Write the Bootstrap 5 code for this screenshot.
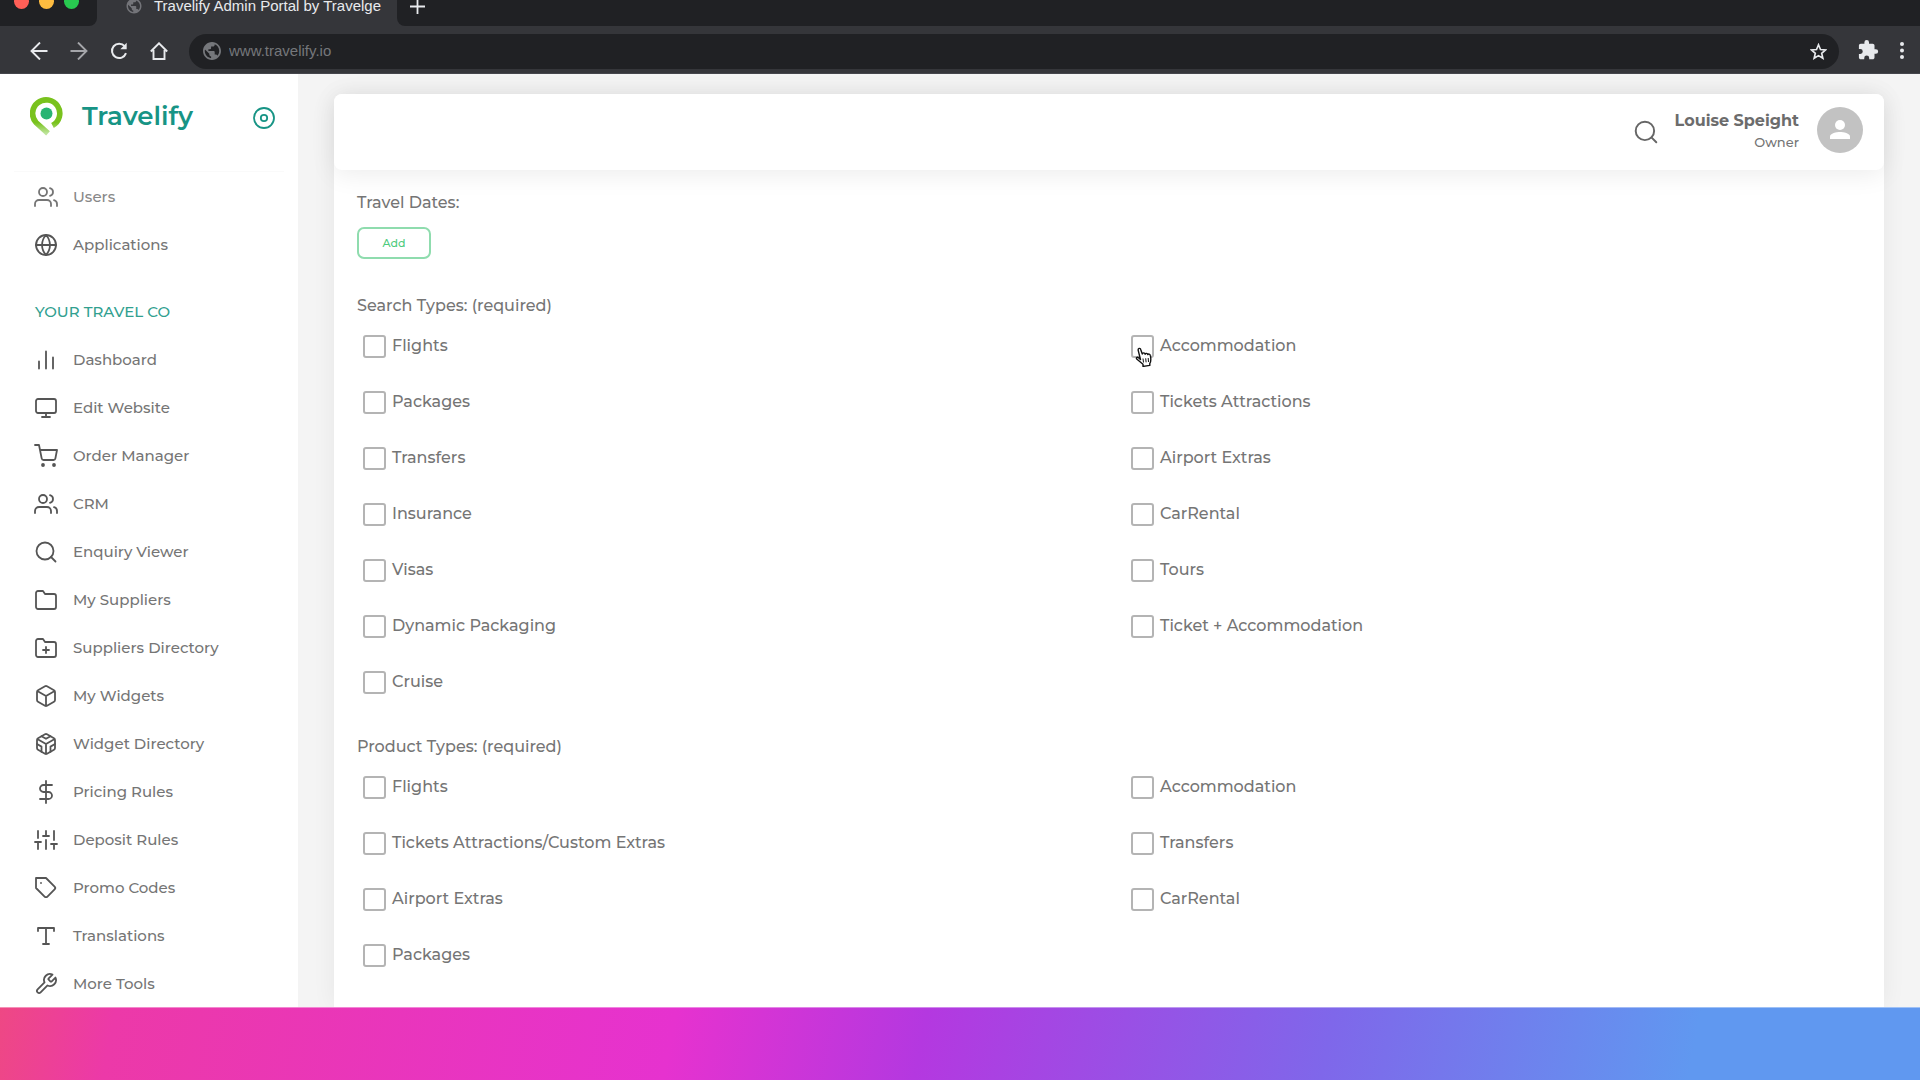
<!DOCTYPE html>
<html lang="en">
<head>
<meta charset="utf-8">
<meta name="viewport" content="width=device-width, initial-scale=1">
<title>Travelify Admin Portal</title>
<link href="https://cdn.jsdelivr.net/npm/bootstrap@5.3.0/dist/css/bootstrap.min.css" rel="stylesheet">
<style>
  body { font-family: Montserrat, Inter, "Open Sans", sans-serif; font-weight: 500; color: #757575; background: #f4f4f4; }
  svg { display: block; flex: none; }
  .ico { width: 24px; height: 24px; fill: none; stroke: currentColor; stroke-width: 1.8; stroke-linecap: round; stroke-linejoin: round; }

  /* browser chrome */
  .chrome { font-family: "Liberation Sans", Arial, sans-serif; font-weight: 400; background: #35363a; }
  .tab-strip { height: 26px; }
  .strip-left { width: 97px; padding-left: 14px; background: #202124; border-bottom-right-radius: 8px; }
  .strip-right { background: #202124; border-bottom-left-radius: 8px; padding-left: 11px; }
  .strip-item { height: 40px; margin-top: -14px; }
  .lights { gap: 10px; }
  .light { width: 15px; height: 15px; border-radius: 50%; margin-bottom: 10px; }
  .light-close { background: #ff5f57; }
  .light-min { background: #febc40; }
  .light-max { background: #28c950; }
  .page-tab { width: 300px; padding-left: 28px; gap: 11px; color: #e8eaed; font-size: 15px; }
  .toolbar { height: 48px; padding: 3px 7px 0 30px; border-bottom: 1px solid #45464c; }
  .tool-btn { display: flex; align-items: center; justify-content: center; flex: none; padding: 0; border: 0; background: none; color: #e8eaed; width: 18px; height: 18px; }
  .tool-nav { gap: 22px; margin-right: 21px; }
  .tool-end { gap: 17px; margin-left: 21px; }
  .address { height: 35px; border-radius: 18px; background: #202124; padding: 0 12px 0 14px; gap: 8px; }
  .address input { background: none; border: 0; outline: 0; color: #75777b; font-size: 15px; padding: 0; min-width: 0; }

  /* sidebar */
  .sidebar { width: 298px; background: #fff; }
  .brand-row { height: 97px; padding: 22px 22px 0 30px; }
  .brand-name { color: #179485; font-size: 26px; line-height: 41px; font-weight: 600; margin-left: 19px; }
  .brand-row .plain-btn { margin-top: 10px; color: #179485; }
  .side-link { height: 48px; padding-left: 34px; gap: 15px; font-size: 15px; color: #757575; text-decoration: none; }
  .side-link .ico { color: #555; }
  .side-link.faded { color: #888; }
  .side-link.faded .ico { color: #757575; }
  .side-heading { height: 67px; padding: 18px 0 0 35px; margin: 0; font-size: 15px; font-weight: 500; color: #31a08f; }
  .side-rule { border-top: 1px solid #fafafa; margin: 0 14px; height: 2px; }

  /* main panel */
  .stage { padding: 20px 36px 0; }
  .panel { background: #fff; border-radius: 8px 8px 0 0; box-shadow: 0 0 24px rgba(0,0,0,.06); }
  .panel-head { height: 76px; padding: 0 21px 4px; background: #fff; border-radius: 8px; box-shadow: 0 4px 26px rgba(0,0,0,.08); }
  .user-block { padding-top: 2px; }
  .user-name { font-size: 16px; line-height: 22px; font-weight: 700; color: #6c6c6c; }
  .user-role { font-size: 13px; line-height: 20px; }
  .avatar-dot { width: 46px; height: 46px; border-radius: 50%; background: #c2c2c2; margin-left: 18px; }
  .plain-btn { padding: 0; border: 0; background: none; color: #666; }
  .panel-head .ico { width: 26px; height: 26px; }
  .form-area { padding: 21px 0 24px 14px; font-size: 16px; line-height: 24px; }
  .group-title { font-size: 16px; line-height: 24px; margin: 0 0 0 9px; font-weight: 500; float: none; }
  .dates { padding-left: 9px; gap: 12px; margin-bottom: 35px; }
  .add-btn { width: 74px; height: 32px; padding: 0; font-size: 11px; font-weight: 500; border-radius: 7px; color: #4ecb7d; border: 2px solid #8fdcae; background: #fff; }
  .group + .group { margin-top: 25px; }
  .pick { height: 56px; padding: 0 0 0 15px; margin: 0; gap: 6px; }
  .pick .form-check-input { float: none; width: 23px; height: 23px; margin: 0; border: 2px solid #b4b4b4; border-radius: 3px; flex: none; }
  .pointer { left: 19px; top: 29px; }

  .gradient-bar { height: 73px; border-top: 1px solid rgba(255,255,255,.4); background: linear-gradient(101deg, #ee4884 0%, #ec39a8 6%, #e632cf 35%, #b438e0 48%, #7f67ea 69%, #6098f0 88%, #6098f0 100%) border-box; }
</style>
<script src="https://cdn.jsdelivr.net/npm/bootstrap@5.3.0/dist/js/bootstrap.bundle.min.js"></script>
</head>
<body>
<svg width="0" height="0" class="position-absolute" aria-hidden="true">
  <symbol id="users" viewBox="0 0 24 24"><path d="M17 21v-2a4 4 0 0 0-4-4H5a4 4 0 0 0-4 4v2"/><circle cx="9" cy="7" r="4"/><path d="M23 21v-2a4 4 0 0 0-3-3.87M16 3.13a4 4 0 0 1 0 7.75"/></symbol>
  <symbol id="globe" viewBox="0 0 24 24"><circle cx="12" cy="12" r="10"/><path d="M2 12h20M12 2a15.3 15.3 0 0 1 4 10 15.3 15.3 0 0 1-4 10 15.3 15.3 0 0 1-4-10 15.3 15.3 0 0 1 4-10z"/></symbol>
  <symbol id="search" viewBox="0 0 24 24"><circle cx="11" cy="11" r="8.5"/><path d="M21.5 21.5 17 17"/></symbol>
  <symbol id="folder" viewBox="0 0 24 24"><path d="M22 19a2 2 0 0 1-2 2H4a2 2 0 0 1-2-2V5a2 2 0 0 1 2-2h5l2 3h9a2 2 0 0 1 2 2z"/></symbol>
  <symbol id="box" viewBox="0 0 24 24"><path d="M21 16V8a2 2 0 0 0-1-1.73l-7-4a2 2 0 0 0-2 0l-7 4A2 2 0 0 0 3 8v8a2 2 0 0 0 1 1.73l7 4a2 2 0 0 0 2 0l7-4A2 2 0 0 0 21 16zM3.27 6.96 12 12.01l8.73-5.05M12 22.08V12"/></symbol>
  <symbol id="world" viewBox="0 0 24 24"><path d="M12 2C6.48 2 2 6.48 2 12s4.48 10 10 10 10-4.48 10-10S17.52 2 12 2zm-1 17.93c-3.95-.49-7-3.85-7-7.93 0-.62.08-1.21.21-1.79L9 15v1c0 1.1.9 2 2 2v1.93zm6.9-2.54c-.26-.81-1-1.39-1.9-1.39h-1v-3c0-.55-.45-1-1-1H8v-2h2c.55 0 1-.45 1-1V7h2c1.1 0 2-.9 2-2v-.41c2.93 1.19 5 4.06 5 7.41 0 2.08-.8 3.97-2.1 5.39z"/></symbol>
</svg>

<div class="d-flex flex-column vh-100 overflow-hidden">
  <header class="chrome flex-shrink-0">
    <div class="tab-strip d-flex">
      <div class="strip-left">
        <div class="strip-item lights d-flex align-items-center">
          <span class="light light-close"></span><span class="light light-min"></span><span class="light light-max"></span>
        </div>
      </div>
      <div class="page-tab strip-item d-flex align-items-center text-nowrap">
        <svg width="18" height="18" fill="#737479"><use href="#world"/></svg>
        <span>Travelify Admin Portal by Travelge</span>
      </div>
      <div class="strip-right flex-grow-1">
        <div class="strip-item d-flex align-items-center">
          <button class="tool-btn" aria-label="New tab"><svg width="15" height="15" viewBox="0 0 15 15" stroke="currentColor" stroke-width="1.8"><path d="M7.500 0v15M0 7.500h15"/></svg></button>
        </div>
      </div>
    </div>
    <div class="toolbar d-flex align-items-center">
      <div class="tool-nav d-flex">
        <button class="tool-btn" aria-label="Back"><svg width="18" height="18" viewBox="0 0 18 18" fill="none" stroke="currentColor" stroke-width="1.9"><path d="M17.500 9H1.500M10 .5 1.500 9l8.500 8.500"/></svg></button>
        <button class="tool-btn" aria-label="Forward"><svg width="18" height="18" viewBox="0 0 18 18" fill="none" stroke="#a5a6aa" stroke-width="1.900"><path d="M.5 9h16M8 .5 16.500 9 8 17.500"/></svg></button>
        <button class="tool-btn" aria-label="Reload"><svg width="18" height="18" viewBox="0 0 18 18" fill="none" stroke="currentColor" stroke-width="2"><path d="M14.700 4.200A7.200 7.200 0 1 0 16 11.200"/><path d="M16.700 .8v6.400h-6.400z" fill="currentColor" stroke="none"/></svg></button>
        <button class="tool-btn" aria-label="Home"><svg width="18" height="18" viewBox="0 0 18 18" fill="none" stroke="currentColor" stroke-width="1.900"><path d="M.8 9.500 9 1.300l8.200 8.200M3.500 8v9h11V8"/></svg></button>
      </div>
      <div class="address d-flex align-items-center flex-grow-1">
        <svg width="18" height="18" viewBox="2 2 20 20" fill="#75777b"><use href="#world" width="24" height="24"/></svg>
        <input class="flex-grow-1" type="text" value="www.travelify.io" aria-label="Address">
        <button class="tool-btn" aria-label="Bookmark"><svg width="17" height="17" viewBox="0 0 24 24" fill="none" stroke="currentColor" stroke-width="2.300"><path d="m12 2.500 2.800 6.700 7.200.6-5.500 4.700 1.700 7.100L12 17.800l-6.200 3.800 1.700-7.100L2 9.800l7.200-.6z"/></svg></button>
      </div>
      <div class="tool-end d-flex">
        <button class="tool-btn" aria-label="Extensions"><svg width="22" height="22" viewBox="1 1 24 24" fill="currentColor"><path d="M20.500 11H19V7c0-1.100-.9-2-2-2h-4V3.500a2.500 2.500 0 0 0-5 0V5H4c-1.100 0-2 .9-2 2v3.800h1.500a2.700 2.700 0 0 1 0 5.400H2V20c0 1.100.9 2 2 2h3.800v-1.500a2.700 2.700 0 0 1 5.400 0V22H17c1.100 0 2-.9 2-2v-4h1.500a2.500 2.500 0 0 0 0-5z"/></svg></button>
        <button class="tool-btn" aria-label="Menu"><svg width="18" height="18" viewBox="0 0 18 18" fill="currentColor"><circle cx="7" cy="2" r="2"/><circle cx="7" cy="8.500" r="2"/><circle cx="7" cy="15" r="2"/></svg></button>
      </div>
    </div>
  </header>

  <div class="d-flex flex-grow-1 overflow-hidden">
    <nav class="sidebar flex-shrink-0 overflow-hidden">
      <div class="brand-row d-flex align-items-start">
        <svg width="33" height="40" viewBox="0 0 33 40"><defs><linearGradient id="pin" x1="0" y1="0" x2="0" y2="1"><stop offset=".68" stop-color="#79c21d"/><stop offset="1" stop-color="#bde49a"/></linearGradient></defs><path d="M22.500 29.500A13.600 13.600 0 1 0 6.300 26.800L18 37.300" fill="none" stroke="url(#pin)" stroke-width="5.600"/><circle cx="16.500" cy="17.500" r="6" fill="#28b473"/></svg>
        <span class="brand-name">Travelify</span>
        <button class="plain-btn ms-auto" aria-label="Toggle sidebar"><svg class="ico" viewBox="0 0 24 24"><circle cx="12" cy="12" r="10"/><circle cx="12" cy="12" r="3.200"/></svg></button>
      </div>
      <div class="side-rule"></div>
      <a href="#" class="side-link faded d-flex align-items-center"><svg class="ico"><use href="#users"/></svg>Users</a>
      <a href="#" class="side-link d-flex align-items-center"><svg class="ico"><use href="#globe"/></svg>Applications</a>
      <h2 class="side-heading d-flex align-items-center">YOUR TRAVEL CO</h2>
      <a href="#" class="side-link d-flex align-items-center"><svg class="ico" viewBox="0 0 24 24"><path d="M19 20.500v-11M12 20.500v-17M5 20.500v-7"/></svg>Dashboard</a>
      <a href="#" class="side-link d-flex align-items-center"><svg class="ico" viewBox="0 0 24 24"><rect x="2" y="3" width="20" height="14" rx="2"/><path d="M8 21h8M12 17v4"/></svg>Edit Website</a>
      <a href="#" class="side-link d-flex align-items-center"><svg class="ico" viewBox="0 0 24 24"><circle cx="9" cy="21" r="1"/><circle cx="20" cy="21" r="1"/><path d="M1 1h4l2.680 13.390a2 2 0 0 0 2 1.610h9.720a2 2 0 0 0 2-1.610L23 6H6"/></svg>Order Manager</a>
      <a href="#" class="side-link d-flex align-items-center"><svg class="ico"><use href="#users"/></svg>CRM</a>
      <a href="#" class="side-link d-flex align-items-center"><svg class="ico"><use href="#search"/></svg>Enquiry Viewer</a>
      <a href="#" class="side-link d-flex align-items-center"><svg class="ico"><use href="#folder"/></svg>My Suppliers</a>
      <a href="#" class="side-link d-flex align-items-center"><svg class="ico" viewBox="0 0 24 24"><path d="M22 19a2 2 0 0 1-2 2H4a2 2 0 0 1-2-2V5a2 2 0 0 1 2-2h5l2 3h9a2 2 0 0 1 2 2zM12 11v6M9 14h6"/></svg>Suppliers Directory</a>
      <a href="#" class="side-link d-flex align-items-center"><svg class="ico"><use href="#box"/></svg>My Widgets</a>
      <a href="#" class="side-link d-flex align-items-center"><svg class="ico" viewBox="0 0 24 24"><use href="#box"/><path d="M7.500 4.210 12 6.810l4.500-2.600M7.500 19.790V14.600L3 12M21 12l-4.500 2.600v5.190"/></svg>Widget Directory</a>
      <a href="#" class="side-link d-flex align-items-center"><svg class="ico" viewBox="0 0 24 24"><path d="M12 1v22M18 5H9.500a3.500 3.500 0 0 0 0 7h5a3.500 3.500 0 0 1 0 7H6"/></svg>Pricing Rules</a>
      <a href="#" class="side-link d-flex align-items-center"><svg class="ico" viewBox="0 0 24 24"><path d="M4 21v-7M4 10V3M12 21v-9M12 8V3M20 21v-5M20 12V3M1 14h6M9 8h6M17 16h6"/></svg>Deposit Rules</a>
      <a href="#" class="side-link d-flex align-items-center"><svg class="ico" viewBox="0 0 24 24"><path d="m20.590 13.410-7.170 7.170a2 2 0 0 1-2.830 0L2 12V2h10l8.590 8.590a2 2 0 0 1 0 2.820zM7 7h.01"/></svg>Promo Codes</a>
      <a href="#" class="side-link d-flex align-items-center"><svg class="ico" viewBox="0 0 24 24"><path d="M4 7V4h16v3M9 20h6M12 4v16"/></svg>Translations</a>
      <a href="#" class="side-link d-flex align-items-center"><svg class="ico" viewBox="0 0 24 24"><path d="M14.700 6.300a1 1 0 0 0 0 1.400l1.600 1.600a1 1 0 0 0 1.400 0l3.770-3.770a6 6 0 0 1-7.940 7.940l-6.910 6.910a2.120 2.120 0 0 1-3-3l6.910-6.910a6 6 0 0 1 7.940-7.940l-3.760 3.760z"/></svg>More Tools</a>
    </nav>

    <main class="stage flex-grow-1 d-flex overflow-hidden">
      <div class="panel flex-grow-1">
        <div class="panel-head d-flex align-items-center justify-content-end">
          <button class="plain-btn me-3 pt-1" aria-label="Search"><svg class="ico"><use href="#search"/></svg></button>
          <div class="user-block text-end">
            <div class="user-name">Louise Speight</div>
            <div class="user-role">Owner</div>
          </div>
          <span class="avatar-dot d-flex align-items-center justify-content-center">
            <svg width="20" height="20" viewBox="0 0 20 20" fill="#fff"><circle cx="10" cy="5" r="5"/><path d="M0 19v-2.500C0 13.200 6.500 12 10 12s10 1.200 10 4.500V19z"/></svg>
          </span>
        </div>

        <form class="form-area">
          <div class="dates d-flex flex-column align-items-start">
            <span>Travel Dates:</span>
            <button type="button" class="add-btn">Add</button>
          </div>

          <fieldset class="group">
            <legend class="group-title">Search Types: (required)</legend>
            <div class="row g-0 row-cols-2">
              <div class="col"><div class="form-check pick d-flex align-items-center"><input class="form-check-input" type="checkbox" id="s1"><label for="s1">Flights</label></div></div>
              <div class="col"><div class="form-check pick d-flex align-items-center position-relative"><input class="form-check-input" type="checkbox" id="s2"><label for="s2">Accommodation</label>
                <svg class="pointer position-absolute" width="18" height="20" viewBox="0 0 18 20" fill="#fff" stroke="#111" stroke-width="1.400" stroke-linejoin="round"><path d="M5.500 12.500 3.200 3.300C2.800 1.200 5.200.6 5.700 2.500L7.300 7c.2-1.500 2.500-1.500 2.800.2.500-1.300 2.400-1 2.700.4.700-1 2.300-.5 2.500.8.500 2.600 1.300 5.200-.5 8v2l-6.800 1v-2.200L2 12.300C.6 10.700 2.300 9.500 3.500 10.700z"/><path d="m8 11.500.5 4M10.700 11.300l.4 4M13.200 11l.3 4" stroke-width="1"/></svg></div></div>
              <div class="col"><div class="form-check pick d-flex align-items-center"><input class="form-check-input" type="checkbox" id="s3"><label for="s3">Packages</label></div></div>
              <div class="col"><div class="form-check pick d-flex align-items-center"><input class="form-check-input" type="checkbox" id="s4"><label for="s4">Tickets Attractions</label></div></div>
              <div class="col"><div class="form-check pick d-flex align-items-center"><input class="form-check-input" type="checkbox" id="s5"><label for="s5">Transfers</label></div></div>
              <div class="col"><div class="form-check pick d-flex align-items-center"><input class="form-check-input" type="checkbox" id="s6"><label for="s6">Airport Extras</label></div></div>
              <div class="col"><div class="form-check pick d-flex align-items-center"><input class="form-check-input" type="checkbox" id="s7"><label for="s7">Insurance</label></div></div>
              <div class="col"><div class="form-check pick d-flex align-items-center"><input class="form-check-input" type="checkbox" id="s8"><label for="s8">CarRental</label></div></div>
              <div class="col"><div class="form-check pick d-flex align-items-center"><input class="form-check-input" type="checkbox" id="s9"><label for="s9">Visas</label></div></div>
              <div class="col"><div class="form-check pick d-flex align-items-center"><input class="form-check-input" type="checkbox" id="s10"><label for="s10">Tours</label></div></div>
              <div class="col"><div class="form-check pick d-flex align-items-center"><input class="form-check-input" type="checkbox" id="s11"><label for="s11">Dynamic Packaging</label></div></div>
              <div class="col"><div class="form-check pick d-flex align-items-center"><input class="form-check-input" type="checkbox" id="s12"><label for="s12">Ticket + Accommodation</label></div></div>
              <div class="col"><div class="form-check pick d-flex align-items-center"><input class="form-check-input" type="checkbox" id="s13"><label for="s13">Cruise</label></div></div>
            </div>
          </fieldset>

          <fieldset class="group">
            <legend class="group-title">Product Types: (required)</legend>
            <div class="row g-0 row-cols-2">
              <div class="col"><div class="form-check pick d-flex align-items-center"><input class="form-check-input" type="checkbox" id="p1"><label for="p1">Flights</label></div></div>
              <div class="col"><div class="form-check pick d-flex align-items-center"><input class="form-check-input" type="checkbox" id="p2"><label for="p2">Accommodation</label></div></div>
              <div class="col"><div class="form-check pick d-flex align-items-center"><input class="form-check-input" type="checkbox" id="p3"><label for="p3">Tickets Attractions/Custom Extras</label></div></div>
              <div class="col"><div class="form-check pick d-flex align-items-center"><input class="form-check-input" type="checkbox" id="p4"><label for="p4">Transfers</label></div></div>
              <div class="col"><div class="form-check pick d-flex align-items-center"><input class="form-check-input" type="checkbox" id="p5"><label for="p5">Airport Extras</label></div></div>
              <div class="col"><div class="form-check pick d-flex align-items-center"><input class="form-check-input" type="checkbox" id="p6"><label for="p6">CarRental</label></div></div>
              <div class="col"><div class="form-check pick d-flex align-items-center"><input class="form-check-input" type="checkbox" id="p7"><label for="p7">Packages</label></div></div>
            </div>
          </fieldset>
        </form>
      </div>
    </main>
  </div>

  <footer class="gradient-bar flex-shrink-0"></footer>
</div>
</body>
</html>
